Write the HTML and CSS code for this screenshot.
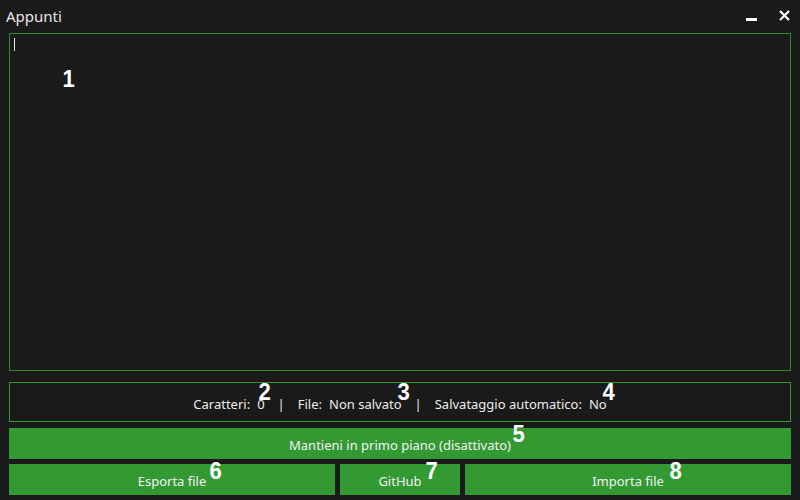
FILE: index.html
```html
<!DOCTYPE html>
<html lang="it">
<head>
<meta charset="utf-8">
<title>Appunti</title>
<link rel="stylesheet" href="styles.css">
</head>
<body>
<div class="app">
  <header class="titlebar">
    <span class="title">Appunti</span>
    <div class="controls">
      <span class="min"></span>
      <svg class="close" width="11" height="11" viewBox="0 0 11 11"><path d="M1 1 L10 10 M10 1 L1 10" stroke="#fff" stroke-width="2.2"/></svg>
    </div>
  </header>
  <div class="editor"><span class="caret"></span></div>
  <div class="status">
    <span>Caratteri:</span><span>0</span><span class="pipe">|</span>
    <span>File:</span><span>Non salvato</span><span class="pipe">|</span>
    <span>Salvataggio automatico:</span><span>No</span>
  </div>
  <button class="btn wide">Mantieni in primo piano (disattivato)</button>
  <div class="row">
    <button class="btn grow">Esporta file</button>
    <button class="btn small">GitHub</button>
    <button class="btn grow">Importa file</button>
  </div>
  <span class="num" style="left:62px;top:67px">1</span>
  <span class="num" style="left:258px;top:380px">2</span>
  <span class="num" style="left:397px;top:380px">3</span>
  <span class="num" style="left:602px;top:380px">4</span>
  <span class="num" style="left:512px;top:422px">5</span>
  <span class="num" style="left:209px;top:459px">6</span>
  <span class="num" style="left:425px;top:459px">7</span>
  <span class="num" style="left:669px;top:459px">8</span>
</div>
</body>
</html>
```
FILE: styles.css
```css
html, body { margin: 0; padding: 0; background: #1a1a1a; }
.app {
  position: relative;
  width: 800px;
  height: 500px;
  box-sizing: border-box;
  padding: 0 9px 5px 9px;
  display: flex;
  flex-direction: column;
  font-family: "Noto Sans", "Open Sans", sans-serif;
  color: #ececec;
}
.titlebar {
  height: 33px;
  margin: 0 -9px;
  padding: 0 10px 0 6px;
  display: flex;
  align-items: center;
  justify-content: space-between;
}
.title { font-size: 15px; color: #e6e6e6; margin-top: -1px; }
.controls { display: flex; align-items: center; gap: 22px; }
.min { width: 11px; height: 3px; background: #fff; margin-top: 6px; }
.close { margin-top: -1px; }
.editor {
  height: 339px;
  box-sizing: border-box;
  border: 1px solid #2f8a2f;
  padding: 4px 4px;
}
.caret { display: block; width: 1px; height: 13px; background: #e8e8e8; }
.status {
  margin-top: 11px;
  height: 40px;
  box-sizing: border-box;
  border: 1px solid #2f9a2f;
  display: flex;
  align-items: center;
  justify-content: center;
  padding-top: 4px;
  font-size: 13px;
  gap: 7px;
}
.status .pipe { margin: 0 6px; }
.btn {
  border: none;
  background: #339933;
  color: #f2f2f2;
  font-family: inherit;
  font-size: 13px;
  height: 31px;
  padding: 0;
  padding-top: 3px;
}
.wide { margin-top: 6px; }
.row { margin-top: 5px; display: flex; gap: 5px; }
.grow { flex: 1; }
.small { width: 120px; }
.num {
  position: absolute;
  font-family: "Liberation Sans", Arial, sans-serif;
  font-weight: bold;
  font-size: 24px;
  color: #fff;
  line-height: 1;
  transform: scaleX(0.92);
}
```
